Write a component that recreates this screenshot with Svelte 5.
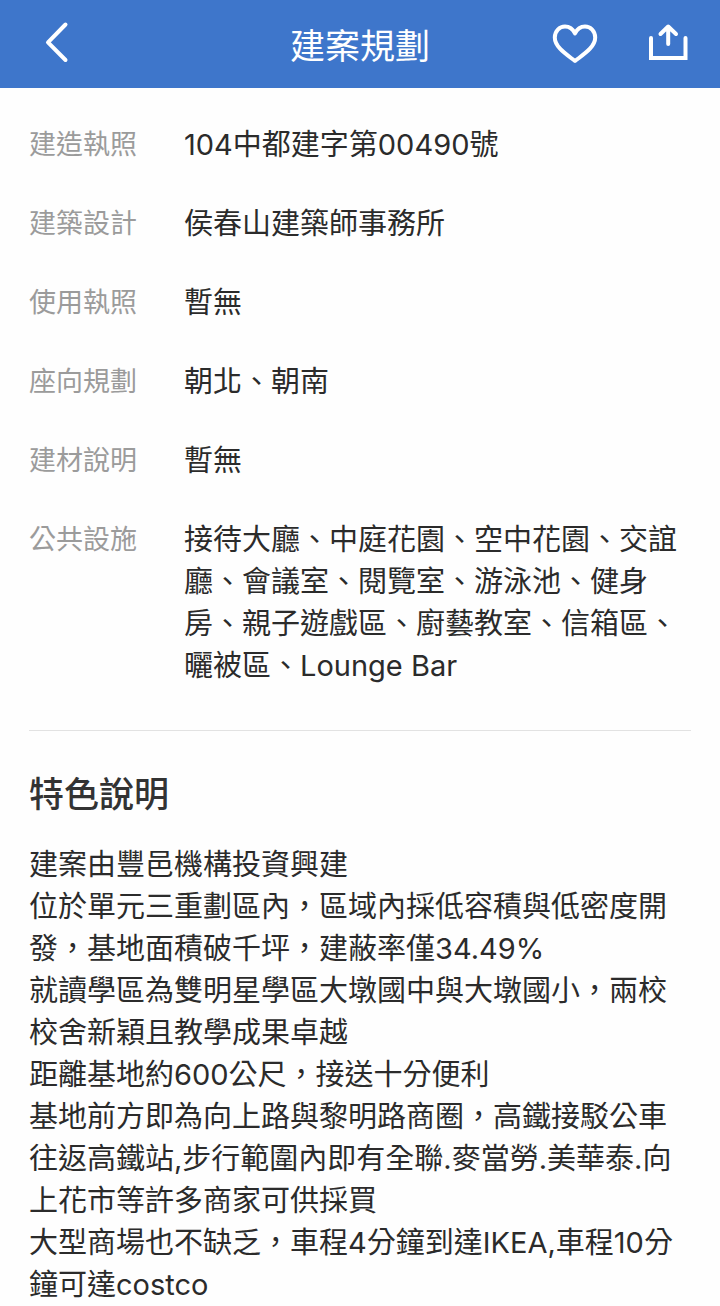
<script>
  const details = [
    { label: '建造執照', value: '104中都建字第00490號' },
    { label: '建築設計', value: '侯春山建築師事務所' },
    { label: '使用執照', value: '暫無' },
    { label: '座向規劃', value: '朝北、朝南' },
    { label: '建材說明', value: '暫無' },
    {
      label: '公共設施',
      value:
        '接待大廳、中庭花園、空中花園、交誼廳、會議室、閱覽室、游泳池、健身房、親子遊戲區、廚藝教室、信箱區、曬被區、Lounge Bar'
    }
  ]

  const features = [
    '建案由豐邑機構投資興建',
    '位於單元三重劃區內，區域內採低容積與低密度開發，基地面積破千坪，建蔽率僅34.49%',
    '就讀學區為雙明星學區大墩國中與大墩國小，兩校校舍新穎且教學成果卓越',
    '距離基地約600公尺，接送十分便利',
    '基地前方即為向上路與黎明路商圈，高鐵接駁公車往返高鐵站,步行範圍內即有全聯.麥當勞.美華泰.向上花市等許多商家可供採買',
    '大型商場也不缺乏，車程4分鐘到達IKEA,車程10分鐘可達costco'
  ]
</script>

<div class="page" lang="zh-Hant">
  <header class="navbar">
    <button type="button" class="icon-button" aria-label="返回">
      <svg viewBox="0 0 48 48" aria-hidden="true">
        <path d="M37.5 4.5L20 22.3L37.5 40" />
      </svg>
    </button>
    <h1 class="title">建案規劃</h1>
    <div class="actions">
      <button type="button" class="icon-button" aria-label="收藏">
        <svg viewBox="0 0 48 48" aria-hidden="true">
          <path
            d="M24 41C15 34 3.8 27 3.8 17.500C3.8 11 8.500 6.500 14 6.500C18.500 6.500 22 9.300 24 13.500C26 9.300 29.500 6.500 34 6.500C39.500 6.500 44.200 11 44.200 17.500C44.200 27 33 34 24 41Z"
          />
        </svg>
      </button>
      <button type="button" class="icon-button" aria-label="分享">
        <svg viewBox="0 0 48 48" aria-hidden="true">
          <path d="M7 18V38H41.5V18" stroke-linejoin="miter" />
          <path d="M24.2 24V7M16.5 14L24.2 6.5L32 14" />
        </svg>
      </button>
    </div>
  </header>

  <main class="content">
    <dl class="details">
      {#each details as item}
        <div class="row">
          <dt>{item.label}</dt>
          <dd>{item.value}</dd>
        </div>
      {/each}
    </dl>

    <section class="features">
      <h2>特色說明</h2>
      {#each features as line}
        <p>{line}</p>
      {/each}
    </section>
  </main>
</div>

<style>
  :global(body) {
    margin: 0;
    background: #fefefe;
  }

  .page {
    font-family: Inter, 'Noto Sans CJK TC', sans-serif;
    font-size: 29px;
    line-height: 42px;
    color: #2b2b2b;
  }

  .navbar {
    display: grid;
    grid-template-columns: 1fr auto 1fr;
    align-items: center;
    height: 88px;
    padding: 0 28px;
    background: #3e76cb;
    color: #fff;
  }

  .title {
    margin: 0;
    padding-top: 4px;
    font-size: 35px;
    font-weight: 400;
  }

  .actions {
    display: flex;
    justify-content: flex-end;
    gap: 45px;
  }

  .icon-button {
    width: 48px;
    height: 48px;
    padding: 0;
    border: none;
    background: none;
    color: inherit;
    cursor: pointer;
  }

  .icon-button svg {
    display: block;
    width: 100%;
    height: 100%;
    fill: none;
    stroke: currentColor;
    stroke-width: 4;
    stroke-linecap: round;
    stroke-linejoin: round;
  }

  .content {
    padding: 36px 29px 0;
  }

  .details {
    display: flex;
    flex-direction: column;
    gap: 37px;
    margin: 0;
    padding-bottom: 43px;
    border-bottom: 1px solid #e2e2e2;
  }

  .row {
    display: flex;
  }

  dt {
    flex: 0 0 155px;
    font-size: 27px;
    color: #9b9b9b;
  }

  dd {
    flex: 1;
    margin: 0;
  }

  .features {
    padding-top: 42px;
  }

  h2 {
    margin: 0 0 29px;
    font-size: 35px;
    font-weight: 500;
    color: #333;
  }

  p {
    margin: 0;
  }
</style>
